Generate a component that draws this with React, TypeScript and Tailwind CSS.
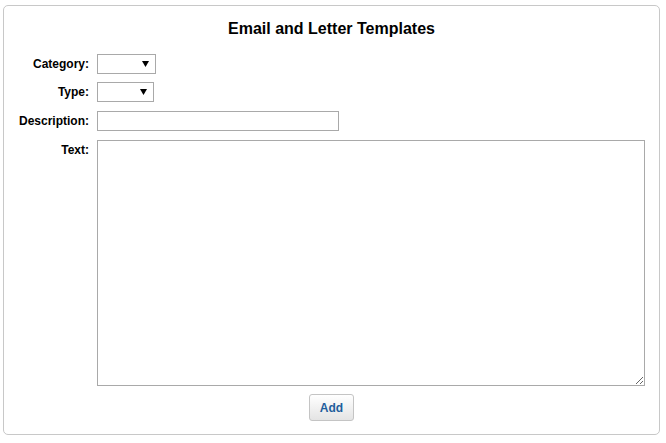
import React from "react";

function FakeSelect({ width }: { width: string }) {
  return (
    <div className={`${width} h-[20px] border border-[#a9a9a9] bg-white flex items-center justify-end pr-[6px]`}>
      <svg width="7" height="6" viewBox="0 0 7 6">
        <path d="M0 0H7L3.5 6Z" fill="#000" />
      </svg>
    </div>
  );
}

export default function App() {
  const font = { fontFamily: '"Liberation Sans", Arial, sans-serif' };
  return (
    <div className="w-[666px] h-[443px] bg-white pt-[5px] pl-[3px]" style={font}>
      <div className="w-[657px] h-[430px] border border-[#c8c8c8] rounded-[5px] flex flex-col pt-[14px]">
        <h1 className="text-[16px] leading-[18px] font-bold text-black text-center">
          Email and Letter Templates
        </h1>
        <div className="flex flex-col mt-[16px] text-[12px] leading-[14px] font-bold text-black">
          <div className="flex items-center">
            <div className="w-[93px] pr-[8px] text-right">Category:</div>
            <FakeSelect width="w-[59px]" />
          </div>
          <div className="flex items-center mt-[8px]">
            <div className="w-[93px] pr-[8px] text-right">Type:</div>
            <FakeSelect width="w-[57px]" />
          </div>
          <div className="flex items-center mt-[9px]">
            <div className="w-[93px] pr-[8px] text-right">Description:</div>
            <input className="w-[242px] h-[20px] border border-[#a9a9a9] bg-white outline-none" />
          </div>
          <div className="flex items-start mt-[9px]">
            <div className="w-[93px] pr-[8px] text-right pt-[3px]">Text:</div>
            <textarea className="w-[548px] h-[246px] border border-[#a9a9a9] bg-white outline-none resize" />
          </div>
        </div>
        <div className="flex justify-center mt-[8px]">
          <button className="w-[45px] h-[27px] rounded-[3px] border border-[#c4c4c4] bg-gradient-to-b from-[#ffffff] to-[#e4e4e4] text-[12px] font-bold text-[#1f5d9c]">
            Add
          </button>
        </div>
      </div>
    </div>
  );
}
